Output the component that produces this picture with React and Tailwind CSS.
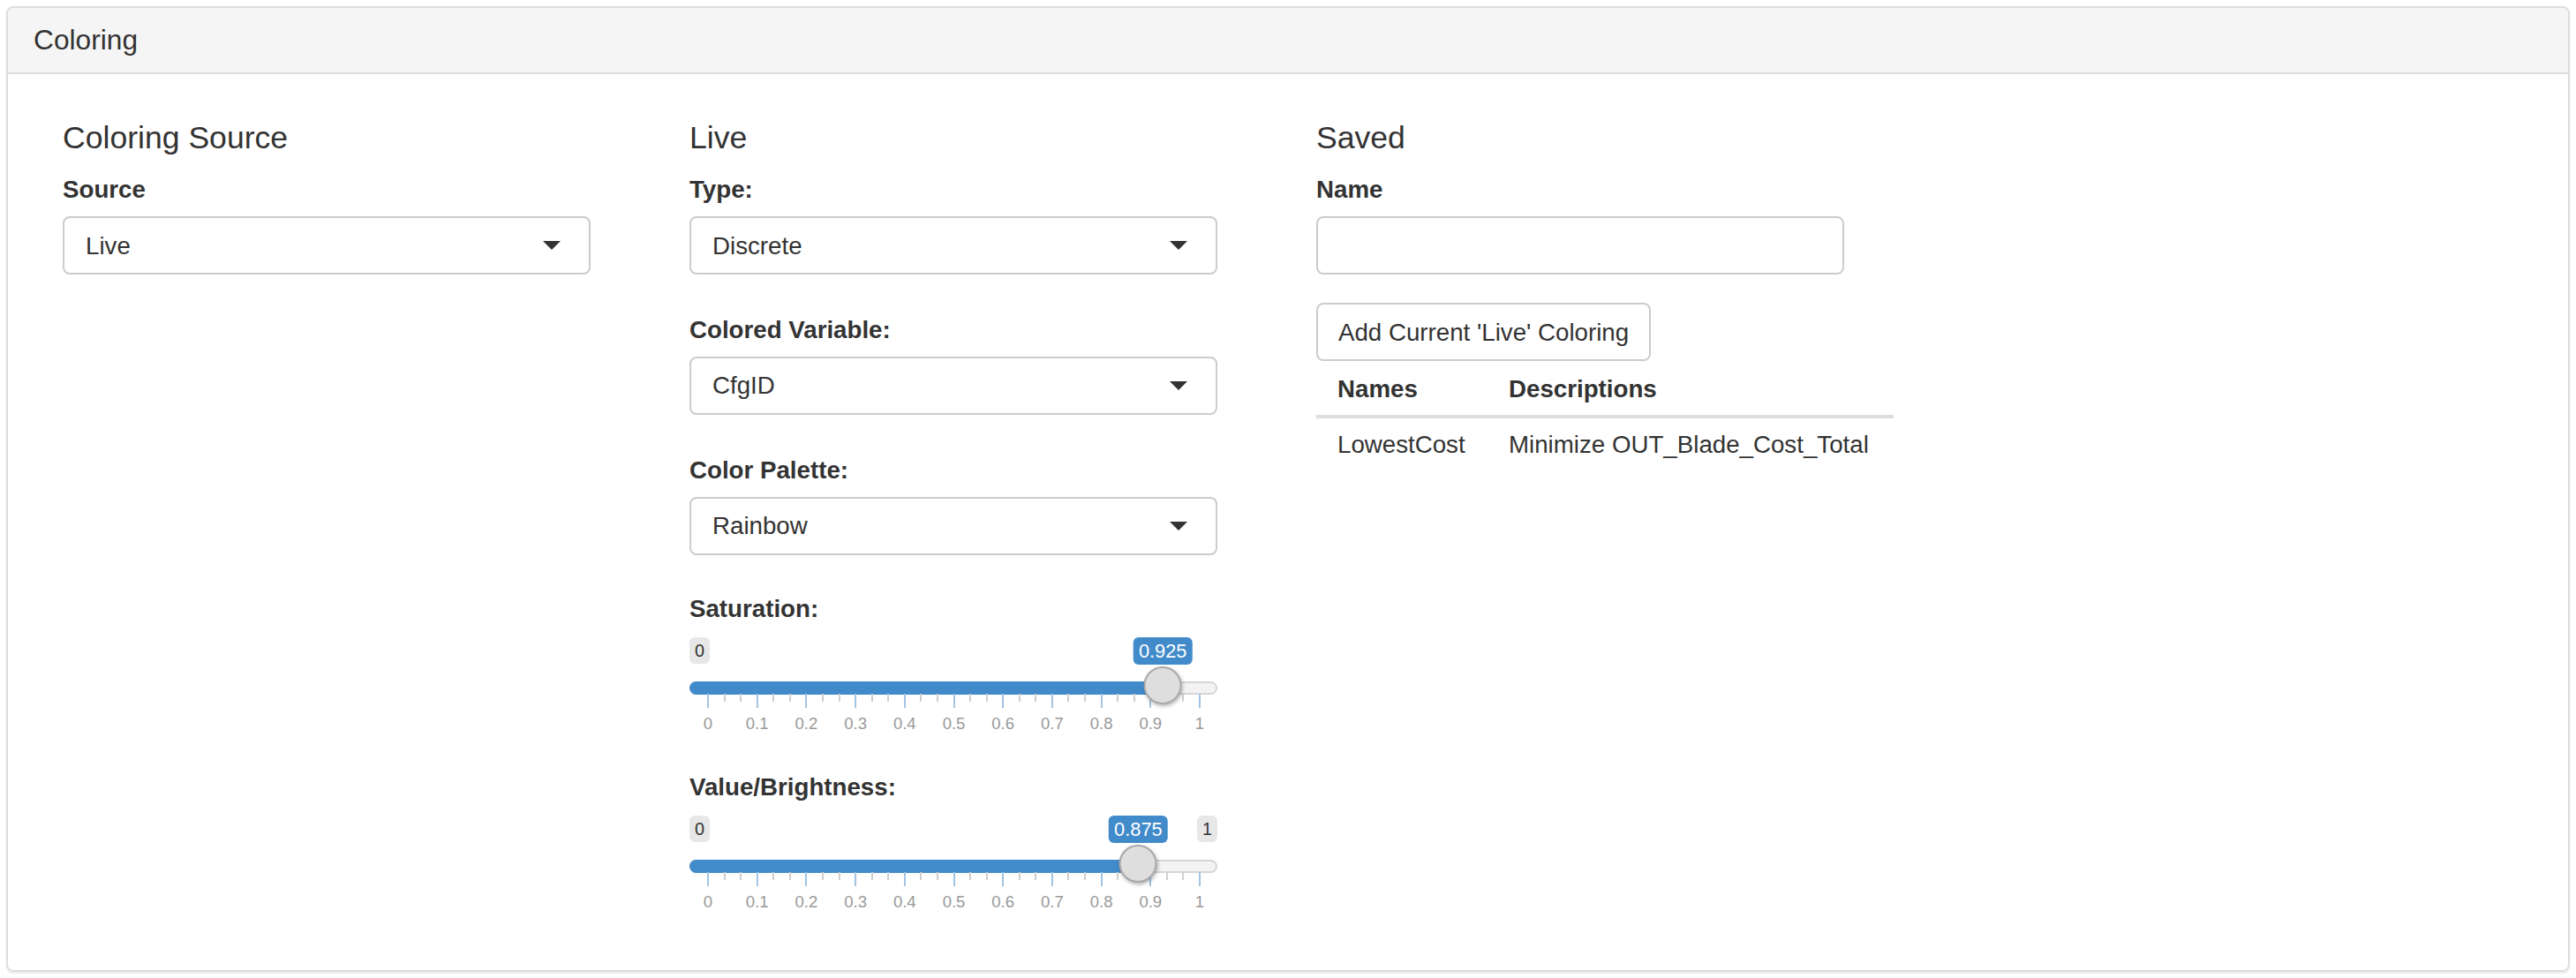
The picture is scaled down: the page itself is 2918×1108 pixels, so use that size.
import { useState } from 'react'

const TRACK_START = 21
const TRACK_SPAN = 557

function Caret() {
  return (
    <span className="h-0 w-0 border-x-[10px] border-t-[10px] border-x-transparent border-t-[#333]" />
  )
}

function SelectBox({ value }) {
  return (
    <div className="flex h-[66px] w-full items-center justify-between rounded-[8px] border-2 border-[#ccc] bg-white pl-[24px] pr-[32px] text-[27.7px]">
      <span>{value}</span>
      <Caret />
    </div>
  )
}

function Label({ children, className = '' }) {
  return <p className={`text-[27.7px] font-bold leading-[27.7px] ${className}`}>{children}</p>
}

function Heading({ children }) {
  return <h4 className="h-[39px] text-[35.6px] leading-[39px]">{children}</h4>
}

function Slider({ value, showMax }) {
  const pos = TRACK_START + value * TRACK_SPAN
  const ticks = Array.from({ length: 31 }, (_, i) => i)

  return (
    <div className="relative h-[125px] w-full">
      <span className="absolute left-0 top-0 h-[30px] rounded-[6px] bg-[#e7e7e7] px-[6px] text-[19.8px] leading-[30px]">
        0
      </span>
      {showMax && (
        <span className="absolute right-0 top-0 h-[30px] rounded-[6px] bg-[#e7e7e7] px-[6px] text-[19.8px] leading-[30px]">
          1
        </span>
      )}
      <span
        className="absolute top-0 h-[31px] -translate-x-1/2 rounded-[6px] bg-[#428bca] px-[6px] text-[21.8px] leading-[31px] text-white"
        style={{ left: pos }}
      >
        {value}
      </span>

      <div className="absolute left-0 right-0 top-[50px] h-[15px] rounded-full border-2 border-[#d6d6d6] bg-[#f3f3f3]" />
      <div className="absolute left-0 top-[50px] h-[15px] rounded-l-full bg-[#428bca]" style={{ width: pos }} />

      {ticks.map((i) => {
        const major = i % 3 === 0
        return (
          <span
            key={i}
            className={major ? 'absolute top-[64px] h-[16px] w-[2px] bg-[#a3c4e3]' : 'absolute top-[64px] h-[9px] w-[2px] bg-[#cfcfcf]'}
            style={{ left: TRACK_START + (i * TRACK_SPAN) / 30 - 1 }}
          />
        )
      })}
      {ticks
        .filter((i) => i % 3 === 0)
        .map((i) => (
          <span
            key={i}
            className="absolute top-[88px] -translate-x-1/2 text-[18.5px] leading-[19px] text-[#999]"
            style={{ left: TRACK_START + (i * TRACK_SPAN) / 30 }}
          >
            {i === 30 ? '1' : i === 0 ? '0' : `0.${i / 3}`}
          </span>
        ))}

      <span
        className="absolute top-[33px] h-[43px] w-[43px] -translate-x-1/2 rounded-full border-2 border-[#a9a9a9] bg-[#dedede] shadow-[1px_2px_4px_rgba(0,0,0,0.3)]"
        style={{ left: pos }}
      />
    </div>
  )
}

export default function App() {
  const [name, setName] = useState('')

  return (
    <div className="min-h-screen bg-white p-[7px] font-['Liberation_Sans',Arial,sans-serif] text-[#333]">
      <div className="h-[1094px] rounded-[8px] border-2 border-[#ddd] shadow-[0_2px_2px_rgba(0,0,0,0.08)]">
        <div className="flex h-[75px] items-center rounded-t-[6px] border-b-2 border-[#ddd] bg-[#f5f5f5] px-[29px] text-[31.7px]">
          Coloring
        </div>

        <div className="flex gap-[112px] pl-[62px] pt-[52.6px]">
          <div className="w-[598px]">
            <Heading>Coloring Source</Heading>
            <Label className="mt-[25.5px]">Source</Label>
            <div className="mt-[16.5px]">
              <SelectBox value="Live" />
            </div>
          </div>

          <div className="w-[598px]">
            <Heading>Live</Heading>
            <Label className="mt-[25.5px]">Type:</Label>
            <div className="mt-[16.5px]">
              <SelectBox value="Discrete" />
            </div>
            <Label className="mt-[48.5px]">Colored Variable:</Label>
            <div className="mt-[16.5px]">
              <SelectBox value="CfgID" />
            </div>
            <Label className="mt-[48.5px]">Color Palette:</Label>
            <div className="mt-[16.5px]">
              <SelectBox value="Rainbow" />
            </div>
            <Label className="mt-[47.6px]">Saturation:</Label>
            <div className="mt-[18px]">
              <Slider value={0.925} showMax={false} />
            </div>
            <Label className="mt-[31.3px]">Value/Brightness:</Label>
            <div className="mt-[18px]">
              <Slider value={0.875} showMax />
            </div>
          </div>

          <div className="w-[598px]">
            <Heading>Saved</Heading>
            <Label className="mt-[25.5px]">Name</Label>
            <input
              className="mt-[16.5px] block h-[66px] w-full rounded-[8px] border-2 border-[#ccc] px-[24px] text-[27.7px] outline-none"
              value={name}
              onChange={(event) => setName(event.target.value)}
            />
            <button className="mt-[32px] h-[66px] rounded-[8px] border-2 border-[#ccc] bg-white px-[23px] text-[27.7px] text-[#333]">
              Add Current 'Live' Coloring
            </button>
            <table className="w-[654px] border-collapse text-left text-[27.7px] leading-[39.6px]">
              <thead>
                <tr className="border-b-4 border-[#ddd]">
                  <th className="w-[194px] px-[24px] pb-[10px] pt-[11.4px] font-bold">Names</th>
                  <th className="px-[24px] pb-[10px] pt-[11.4px] font-bold">Descriptions</th>
                </tr>
              </thead>
              <tbody>
                <tr>
                  <td className="px-[24px] pb-[10px] pt-[9.4px]">LowestCost</td>
                  <td className="px-[24px] pb-[10px] pt-[9.4px]">Minimize OUT_Blade_Cost_Total</td>
                </tr>
              </tbody>
            </table>
          </div>
        </div>
      </div>
    </div>
  )
}
